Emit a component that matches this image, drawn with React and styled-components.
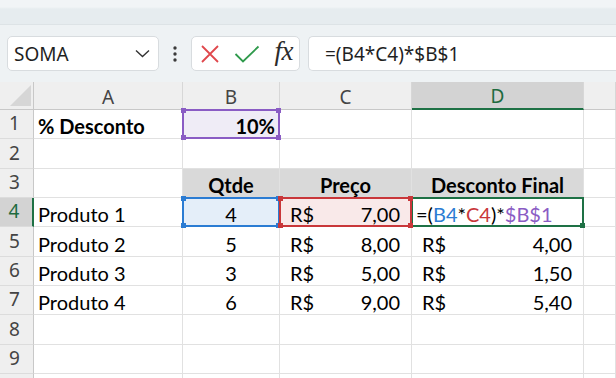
import React from "react";
import styled, { createGlobalStyle, css } from "styled-components";

const GlobalStyle = createGlobalStyle`
  html, body {
    margin: 0;
    padding: 0;
    background: #ffffff;
  }
  * {
    box-sizing: border-box;
  }
`;

const UI_FONT = `"Noto Sans", "Open Sans", "DejaVu Sans", sans-serif`;
const CELL_FONT = `Lato, "Liberation Sans", sans-serif`;

const GRID = "#e1e1e1";
const HEADER_LINE = "#c8c8c8";

const Window = styled.div`
  width: 616px;
  height: 378px;
  overflow: hidden;
  display: flex;
  flex-direction: column;
  background: #ffffff;
`;

const RibbonEdge = styled.div`
  height: 25px;
  flex: none;
  background: linear-gradient(#f1f4f6 0, #f1f4f6 7px, #e6ecef 9px);
  border-bottom: 1px solid #dde3e6;
`;

const FormulaBar = styled.div`
  height: 57px;
  flex: none;
  display: flex;
  align-items: center;
  padding: 0 0 0 7px;
  background: #eef2f4;
`;

const Box = styled.div`
  height: 35px;
  display: flex;
  align-items: center;
  background: #ffffff;
  border: 1px solid #d8dcdf;
  border-radius: 5px;
`;

const NameBox = styled(Box)`
  width: 152px;
  padding: 0 8px 0 6px;
  justify-content: space-between;
  font-family: ${UI_FONT};
  font-size: 19px;
  color: #1f1f1f;
`;

const Dots = styled.div`
  width: 32px;
  display: flex;
  justify-content: center;
`;

const ButtonGroup = styled(Box)`
  width: 109px;
  padding: 0 6px 0 8px;
  justify-content: space-between;
`;

const Fx = styled.span`
  font-family: "Liberation Serif", "DejaVu Serif", serif;
  font-style: italic;
  font-size: 27px;
  color: #2b2b2b;
  letter-spacing: -0.5px;
  line-height: 1;
  margin-top: -4px;
`;

const FormulaInput = styled(Box)`
  flex: 1;
  margin-left: 8px;
  border-right: none;
  border-radius: 5px 0 0 5px;
  padding-left: 16px;
  font-family: ${UI_FONT};
  font-size: 19px;
  color: #1f1f1f;
`;

const Sheet = styled.div`
  display: grid;
  grid-template-columns: 34px 149px 97px 132px 172px 1fr;
  grid-template-rows: 28px repeat(10, 29.33px);
`;

const HeaderCell = styled.div`
  display: flex;
  align-items: center;
  justify-content: center;
  background: ${(p) => (p.$active ? "#d3d3d3" : "#efefef")};
  color: ${(p) => (p.$active ? "#1e6b3f" : "#444444")};
  border-right: 1px solid #d7d7d7;
  border-bottom: ${(p) =>
    p.$active ? "2px solid #1e7145" : `1px solid ${HEADER_LINE}`};
  font-family: ${UI_FONT};
  font-size: 19px;
  padding-top: 2px;
`;

const Corner = styled(HeaderCell)`
  align-items: flex-end;
  justify-content: flex-end;
  padding: 0 2px 3px 0;
  border-right: 1px solid ${HEADER_LINE};
`;

const RowHeader = styled.div`
  display: flex;
  align-items: flex-end;
  justify-content: center;
  padding-bottom: 2px;
  padding-right: 4px;
  background: ${(p) => (p.$active ? "#d3d3d3" : "#efefef")};
  color: ${(p) => (p.$active ? "#1e6b3f" : "#444444")};
  border-right: ${(p) =>
    p.$active ? "2px solid #1e7145" : `1px solid ${HEADER_LINE}`};
  border-bottom: 1px solid #dcdcdc;
  font-family: ${UI_FONT};
  font-size: 19px;
`;

const Cell = styled.div`
  position: relative;
  display: flex;
  align-items: flex-end;
  justify-content: ${(p) =>
    p.$align === "right"
      ? "flex-end"
      : p.$align === "center"
      ? "center"
      : "flex-start"};
  padding: 0 4px 0 4px;
  border-right: 1px solid ${GRID};
  border-bottom: 1px solid ${GRID};
  background: ${(p) => p.$bg || "#ffffff"};
  font-family: ${CELL_FONT};
  font-size: 20px;
  line-height: 24px;
  font-weight: ${(p) => (p.$bold ? 700 : 400)};
  color: #000000;
  white-space: nowrap;
`;

const MoneyCell = styled(Cell)`
  justify-content: space-between;
  padding: 0 11px 0 10px;
`;

const Selection = styled.div`
  position: absolute;
  top: -1px;
  left: -1px;
  right: -1px;
  bottom: -1px;
  border: 2px solid ${(p) => p.$color};
  pointer-events: none;
  z-index: ${(p) => p.$z || 1};
`;

const Handle = styled.span`
  position: absolute;
  width: 5px;
  height: 5px;
  background: ${(p) => p.$color};
  ${(p) => (p.$top ? css`top: -3px;` : css`bottom: -3px;`)}
  ${(p) => (p.$left ? css`left: -3px;` : css`right: -3px;`)}
`;

const Ref = styled.span`
  color: ${(p) => p.$color};
`;

const COLORS = {
  purple: "#8a5cc4",
  blue: "#2b7cd3",
  red: "#c9373a",
  green: "#1e7145",
};

function Highlight({ color, corners = ["tl", "tr", "bl", "br"], z }) {
  return (
    <Selection $color={color} $z={z}>
      {corners.map((c) => (
        <Handle key={c} $color={color} $top={c[0] === "t"} $left={c[1] === "l"} />
      ))}
    </Selection>
  );
}

function Chevron() {
  return (
    <svg width="15" height="9" viewBox="0 0 15 9">
      <polyline points="1,1.5 7.5,7.5 14,1.5" fill="none" stroke="#333" strokeWidth="1.4" />
    </svg>
  );
}

function VerticalDots() {
  return (
    <svg width="4" height="16" viewBox="0 0 4 16">
      <circle cx="2" cy="2" r="1.7" fill="#3a3a3a" />
      <circle cx="2" cy="8" r="1.7" fill="#3a3a3a" />
      <circle cx="2" cy="14" r="1.7" fill="#3a3a3a" />
    </svg>
  );
}

function CancelIcon() {
  return (
    <svg width="20" height="20" viewBox="0 0 20 20">
      <path d="M2 2 L18 18 M18 2 L2 18" stroke="#e0474c" strokeWidth="1.8" fill="none" />
    </svg>
  );
}

function EnterIcon() {
  return (
    <svg width="26" height="18" viewBox="0 0 26 18">
      <polyline points="1.5,9 9,16.5 24.5,1.5" stroke="#2f9a4c" strokeWidth="1.8" fill="none" />
    </svg>
  );
}

function CornerTriangle() {
  return (
    <svg width="21" height="21" viewBox="0 0 21 21">
      <polygon points="21,0 21,21 0,21" fill="#d6d6d6" />
    </svg>
  );
}

const columns = ["A", "B", "C", "D", ""];

const products = [
  { name: "Produto 2", qty: 5, price: "8,00", disc: "4,00" },
  { name: "Produto 3", qty: 3, price: "5,00", disc: "1,50" },
  { name: "Produto 4", qty: 6, price: "9,00", disc: "5,40" },
];

function Money({ value, bg, children }) {
  return (
    <MoneyCell $bg={bg}>
      <span>R$</span>
      <span>{value}</span>
      {children}
    </MoneyCell>
  );
}

function EmptyRow({ n }) {
  return (
    <>
      <RowHeader>{n}</RowHeader>
      {columns.map((c, i) => (
        <Cell key={i} />
      ))}
    </>
  );
}

export default function App() {
  return (
    <Window>
      <GlobalStyle />
      <RibbonEdge />
      <FormulaBar>
        <NameBox>
          <span>SOMA</span>
          <Chevron />
        </NameBox>
        <Dots>
          <VerticalDots />
        </Dots>
        <ButtonGroup>
          <CancelIcon />
          <EnterIcon />
          <Fx>fx</Fx>
        </ButtonGroup>
        <FormulaInput>=(B4*C4)*$B$1</FormulaInput>
      </FormulaBar>

      <Sheet>
        <Corner>
          <CornerTriangle />
        </Corner>
        {columns.map((c, i) => (
          <HeaderCell key={i} $active={c === "D"}>
            {c}
          </HeaderCell>
        ))}

        <RowHeader>1</RowHeader>
        <Cell $bold>% Desconto</Cell>
        <Cell $bold $align="right" $bg="#efecf6">
          10%
          <Highlight color={COLORS.purple} />
        </Cell>
        <Cell />
        <Cell />
        <Cell />

        <EmptyRow n={2} />

        <RowHeader>3</RowHeader>
        <Cell />
        <Cell $bold $align="center" $bg="#d9d9d9">Qtde</Cell>
        <Cell $bold $align="center" $bg="#d9d9d9">Preço</Cell>
        <Cell $bold $align="center" $bg="#d9d9d9">Desconto Final</Cell>
        <Cell />

        <RowHeader $active>4</RowHeader>
        <Cell>Produto 1</Cell>
        <Cell $align="center" $bg="#e4eef9">
          4
          <Highlight color={COLORS.blue} z={2} />
        </Cell>
        <Money value="7,00" bg="#f9e9e9">
          <Highlight color={COLORS.red} z={3} />
        </Money>
        <Cell>
          =(<Ref $color={COLORS.blue}>B4</Ref>*<Ref $color={COLORS.red}>C4</Ref>)*
          <Ref $color={COLORS.purple}>$B$1</Ref>
          <Highlight color={COLORS.green} corners={["br"]} z={1} />
        </Cell>
        <Cell />

        {products.map((p, i) => (
          <React.Fragment key={p.name}>
            <RowHeader>{i + 5}</RowHeader>
            <Cell>{p.name}</Cell>
            <Cell $align="center">{p.qty}</Cell>
            <Money value={p.price} />
            <Money value={p.disc} />
            <Cell />
          </React.Fragment>
        ))}

        <EmptyRow n={8} />
        <EmptyRow n={9} />
        <EmptyRow n="" />
      </Sheet>
    </Window>
  );
}
